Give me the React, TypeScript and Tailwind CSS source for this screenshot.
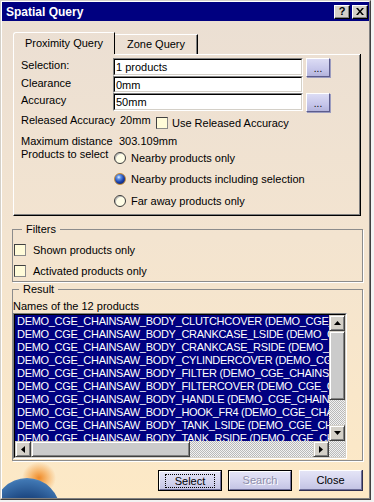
import React from "react";

const ROWS = [
  "DEMO_CGE_CHAINSAW_BODY_CLUTCHCOVER (DEMO_CGE_CHAINSAW_BODY_CLUTCHCOVER.1)",
  "DEMO_CGE_CHAINSAW_BODY_CRANKCASE_LSIDE (DEMO_CGE_CHAINSAW_BODY_CRANKCASE_LSIDE.1)",
  "DEMO_CGE_CHAINSAW_BODY_CRANKCASE_RSIDE (DEMO_CGE_CHAINSAW_BODY_CRANKCASE_RSIDE.1)",
  "DEMO_CGE_CHAINSAW_BODY_CYLINDERCOVER (DEMO_CGE_CHAINSAW_BODY_CYLINDERCOVER.1)",
  "DEMO_CGE_CHAINSAW_BODY_FILTER (DEMO_CGE_CHAINSAW_BODY_FILTER.1)",
  "DEMO_CGE_CHAINSAW_BODY_FILTERCOVER (DEMO_CGE_CHAINSAW_BODY_FILTERCOVER.1)",
  "DEMO_CGE_CHAINSAW_BODY_HANDLE (DEMO_CGE_CHAINSAW_BODY_HANDLE.1)",
  "DEMO_CGE_CHAINSAW_BODY_HOOK_FR4 (DEMO_CGE_CHAINSAW_BODY_HOOK_FR4.1)",
  "DEMO_CGE_CHAINSAW_BODY_TANK_LSIDE (DEMO_CGE_CHAINSAW_BODY_TANK_LSIDE.1)",
  "DEMO_CGE_CHAINSAW_BODY_TANK_RSIDE (DEMO_CGE_CHAINSAW_BODY_TANK_RSIDE.1)",
  "DEMO_CGE_CHAINSAW_BODY_THROTTLE (DEMO_CGE_CHAINSAW_BODY_THROTTLE.1)",
  "DEMO_CGE_CHAINSAW_BODY_TRIGGER (DEMO_CGE_CHAINSAW_BODY_TRIGGER.1)",
];

function Input({ value }: { value: string }) {
  return (
    <div className="w-[190px] h-full border-t border-l border-t-[#808080] border-l-[#808080] border-b border-r border-b-white border-r-white">
      <div className="h-full bg-white border-t border-l border-t-black border-l-black border-b border-r border-b-[#d4d0c8] border-r-[#d4d0c8] pl-[1px] leading-[14px] text-[11px] whitespace-nowrap overflow-hidden">
        {value}
      </div>
    </div>
  );
}

function DotsButton() {
  return (
    <div className="ml-[3px] w-[24px] h-[19px] bg-[linear-gradient(180deg,#dcdcf4_0%,#c6c6ea_60%,#b4b4dc_100%)] border-t border-l border-t-white border-l-white border-b border-r border-b-[#5c5c8c] border-r-[#5c5c8c] shadow-[1px_1px_0_#9c9cc0] flex items-end justify-center leading-[12px] text-[10px] pb-[1px]">
      ...
    </div>
  );
}

function Check() {
  return (
    <div className="w-[12px] h-[12px] shrink-0 bg-[#fffbd9] border border-t-[#404040] border-l-[#404040] border-b-[#8a8a8a] border-r-[#8a8a8a]" />
  );
}

function Radio({ on }: { on?: boolean }) {
  if (on)
    return (
      <div className="w-[12px] h-[12px] shrink-0 rounded-full border border-[#c08a3a] bg-[radial-gradient(circle_at_38%_32%,#dfeeff_0%,#5b8fe6_22%,#1a3fa8_55%,#061448_100%)]" />
    );
  return (
    <div className="w-[12px] h-[12px] shrink-0 rounded-full border border-[#3a3a3a] bg-[#fffde6] shadow-[inset_1px_1px_0_#bdbdbd]" />
  );
}

function Arrow({ dir }: { dir: "up" | "down" | "left" | "right" }) {
  const pts =
    dir === "up"
      ? "0,4 7,4 3.5,0"
      : dir === "down"
      ? "0,0 7,0 3.5,4"
      : dir === "left"
      ? "4,0 4,7 0,3.5"
      : "0,0 0,7 4,3.5";
  const w = dir === "up" || dir === "down" ? 7 : 4;
  const h = dir === "up" || dir === "down" ? 4 : 7;
  return (
    <div className="w-[16px] h-[16px] shrink-0 bg-[#d4d0c8] border border-t-[#d4d0c8] border-l-[#d4d0c8] border-b-[#404040] border-r-[#404040] shadow-[inset_1px_1px_0_#ffffff,inset_-1px_-1px_0_#808080] flex items-center justify-center">
      <svg width={w} height={h} viewBox={`0 0 ${w} ${h}`}>
        <polygon points={pts} fill="#000" />
      </svg>
    </div>
  );
}

const checker =
  "[background-image:repeating-conic-gradient(#b9b9b9_0%_25%,#f2f2f2_0%_50%)] [background-size:2px_2px]";

function BigButton({
  label,
  kind,
}: {
  label: string;
  kind: "focus" | "disabled" | "normal";
}) {
  const inner =
    "h-full w-full bg-[linear-gradient(180deg,#e4e4f6_0%,#d4d4ee_55%,#c4c4e4_100%)] border-t border-l border-t-white border-l-white border-b border-r border-b-[#6e6e9a] border-r-[#6e6e9a] flex items-center justify-center text-[11px]";
  if (kind === "normal")
    return (
      <div className="w-[64px] h-[21px] border-b border-r border-b-[#2e2e4e] border-r-[#2e2e4e]">
        <div className={inner}>{label}</div>
      </div>
    );
  return (
    <div className="w-[64px] h-[21px] border border-black">
      <div className={inner}>
        {kind === "focus" ? (
          <div className="border border-dotted border-black px-[9px] leading-[12px]">
            {label}
          </div>
        ) : (
          <span className="text-[#8e8eaa] [text-shadow:1px_1px_0_#ffffff]">
            {label}
          </span>
        )}
      </div>
    </div>
  );
}

export default function App() {
  return (
    <div className="w-[374px] h-[502px] bg-[#f3f3f3] font-['Liberation_Sans',Arial,sans-serif] text-[11px] text-black">
      <div className="w-[371px] h-[500px] flex flex-col border border-t-[#d4d0c8] border-l-[#d4d0c8] border-b-[#404040] border-r-[#404040]">
        <div className="flex-1 min-h-0 flex flex-col border border-t-white border-l-white border-b-[#808080] border-r-[#808080]">
          {/* Title bar */}
          <div className="h-[19px] shrink-0 bg-[#000080] flex items-center pl-[4px] pr-[1px]">
            <div className="flex-1 text-white font-bold text-[12px] leading-[14px]">
              Spatial Query
            </div>
            <div className="w-[16px] h-[14px] bg-[#d4d0c8] border border-t-white border-l-white border-b-black border-r-black shadow-[inset_-1px_-1px_0_#808080] flex items-center justify-center font-bold text-[11px] leading-[11px]">
              ?
            </div>
            <div className="ml-[2px] w-[16px] h-[14px] bg-[#d4d0c8] border border-t-white border-l-white border-b-black border-r-black shadow-[inset_-1px_-1px_0_#808080] flex items-center justify-center">
              <svg width="8" height="7" viewBox="0 0 8 7">
                <path d="M0 0h2l2 2.5L6 0h2L5 3.5 8 7H6L4 4.5 2 7H0l3-3.5z" fill="#000" />
              </svg>
            </div>
          </div>

          {/* Body */}
          <div className="relative flex-1 min-h-0 flex flex-col pl-[11px] pt-[11px] bg-[linear-gradient(180deg,#ebdfd3_0%,#f3e4d0_45%,#fde9c6_100%)] overflow-hidden">
            {/* Globe decoration */}
            <div className="absolute left-[20px] bottom-[4px] w-[34px] h-[32px] rounded-full bg-[radial-gradient(closest-side,#ef8a28_0%,rgba(245,166,80,0.75)_45%,rgba(253,233,198,0)_100%)]" />
            <div className="absolute left-[-8px] bottom-[-46px] w-[66px] h-[66px] rounded-full bg-[radial-gradient(circle_at_50%_72%,#0b1f46_0%,#1f4a84_50%,#3f76b2_78%,#8fb6dc_92%,#d6e6f4_100%)]" />

            {/* Tabs */}
            <div className="relative flex items-end h-[22px] shrink-0">
              <div className="w-[102px] h-[22px] border-l border-t border-l-white border-t-white rounded-tl-[3px] border-r border-r-black flex items-center justify-center">
                Proximity Query
              </div>
              <div className="w-[83px] h-[20px] border-t border-t-white border-r border-r-black shadow-[inset_-1px_0_0_#808080] flex items-center justify-center">
                Zone Query
              </div>
            </div>

            {/* Tab panel */}
            <div className="relative shrink-0 w-[348px] h-[162px] flex flex-col border-l border-l-white border-r border-r-black border-b border-b-black">
              <div className="flex h-px shrink-0">
                <div className="w-[101px]" />
                <div className="flex-1 bg-white" />
              </div>
              <div className="flex-1 border-r border-r-[#808080] border-b border-b-[#808080] pt-[3px] pl-[7px]">
                <div className="flex items-start h-[18px]">
                  <div className="w-[92px] leading-[14px]">Selection:</div>
                  <Input value="1 products" />
                  <DotsButton />
                </div>
                <div className="flex items-start h-[17px]">
                  <div className="w-[92px] leading-[14px]">Clearance</div>
                  <Input value="0mm" />
                </div>
                <div className="flex items-start h-[18px]">
                  <div className="w-[92px] leading-[14px]">Accuracy</div>
                  <Input value="50mm" />
                  <DotsButton />
                </div>
                <div className="flex items-start mt-[2px] h-[16px]">
                  <div className="w-[99px] leading-[14px]">Released Accuracy</div>
                  <div className="w-[36px] leading-[14px]">20mm</div>
                  <div className="mt-[4px]">
                    <Check />
                  </div>
                  <div className="ml-[4px] mt-[3px] leading-[14px]">
                    Use Released Accuracy
                  </div>
                </div>
                <div className="flex items-start mt-[6px] h-[13px]">
                  <div className="w-[98px] leading-[13px]">Maximum distance</div>
                  <div className="leading-[13px]">303.109mm</div>
                </div>
                <div className="flex items-start">
                  <div className="w-[93px] leading-[13px]">Products to select</div>
                  <div className="flex flex-col pt-[4px]">
                    <div className="flex items-center h-[12px]">
                      <Radio />
                      <span className="ml-[5px] leading-[13px]">Nearby products only</span>
                    </div>
                    <div className="flex items-center h-[12px] mt-[9px]">
                      <Radio on />
                      <span className="ml-[5px] leading-[13px]">
                        Nearby products including selection
                      </span>
                    </div>
                    <div className="flex items-center h-[12px] mt-[10px]">
                      <Radio />
                      <span className="ml-[5px] leading-[13px]">Far away products only</span>
                    </div>
                  </div>
                </div>
              </div>
            </div>

            {/* Filters */}
            <fieldset className="relative shrink-0 mt-[6px] -ml-[1px] w-[351px] h-[60px] border border-[#8c8c8c] shadow-[1px_1px_0_#ffffff] pt-[8px] px-[1px]">
              <legend className="ml-[8px] px-[4px] leading-[14px]">Filters</legend>
              <div className="flex items-center h-[12px]">
                <Check />
                <span className="ml-[7px] leading-[13px]">Shown products only</span>
              </div>
              <div className="flex items-center h-[12px] mt-[9px]">
                <Check />
                <span className="ml-[7px] leading-[13px]">Activated products only</span>
              </div>
            </fieldset>

            {/* Result */}
            <fieldset className="relative shrink-0 -ml-[1px] w-[351px] h-[179px] border border-[#8c8c8c] shadow-[1px_1px_0_#ffffff] pt-[3px]">
              <legend className="ml-[6px] px-[4px] leading-[14px]">Result</legend>
              <div className="leading-[14px]">Names of the 12 products</div>
              <div className="w-[334px] h-[146px] border border-t-[#808080] border-l-[#808080] border-b-white border-r-white">
                <div className="h-full flex flex-col border border-t-black border-l-black border-b-[#d4d0c8] border-r-[#d4d0c8]">
                  <div className="flex h-[126px]">
                    <div className="w-[314px] bg-[#000080] overflow-hidden pl-[2px]">
                      {ROWS.map((r) => (
                        <div
                          key={r}
                          className="h-[13px] leading-[13px] text-white whitespace-nowrap text-[11px] tracking-[-0.3px]"
                        >
                          {r}
                        </div>
                      ))}
                    </div>
                    <div className="w-[16px] flex flex-col">
                      <Arrow dir="up" />
                      <div className="h-[69px] bg-[#cbcbcb] border border-t-[#d4d0c8] border-l-[#d4d0c8] border-b-[#404040] border-r-[#404040] shadow-[inset_1px_1px_0_#ffffff,inset_-1px_-1px_0_#808080]" />
                      <div className={`flex-1 ${checker}`} />
                      <Arrow dir="down" />
                    </div>
                  </div>
                  <div className="flex h-[16px]">
                    <Arrow dir="left" />
                    <div className="w-[159px] bg-[#cbcbcb] border border-t-[#d4d0c8] border-l-[#d4d0c8] border-b-[#404040] border-r-[#404040] shadow-[inset_1px_1px_0_#ffffff,inset_-1px_-1px_0_#808080]" />
                    <div className={`flex-1 ${checker}`} />
                    <Arrow dir="right" />
                    <div className={`w-[16px] ${checker}`} />
                  </div>
                </div>
              </div>
            </fieldset>

            {/* Buttons */}
            <div className="relative shrink-0 mt-[9px] flex justify-end pr-[6px]">
              <BigButton label="Select" kind="focus" />
              <div className="w-[6px]" />
              <BigButton label="Search" kind="disabled" />
              <div className="w-[7px]" />
              <BigButton label="Close" kind="normal" />
            </div>
          </div>
        </div>
      </div>
    </div>
  );
}
